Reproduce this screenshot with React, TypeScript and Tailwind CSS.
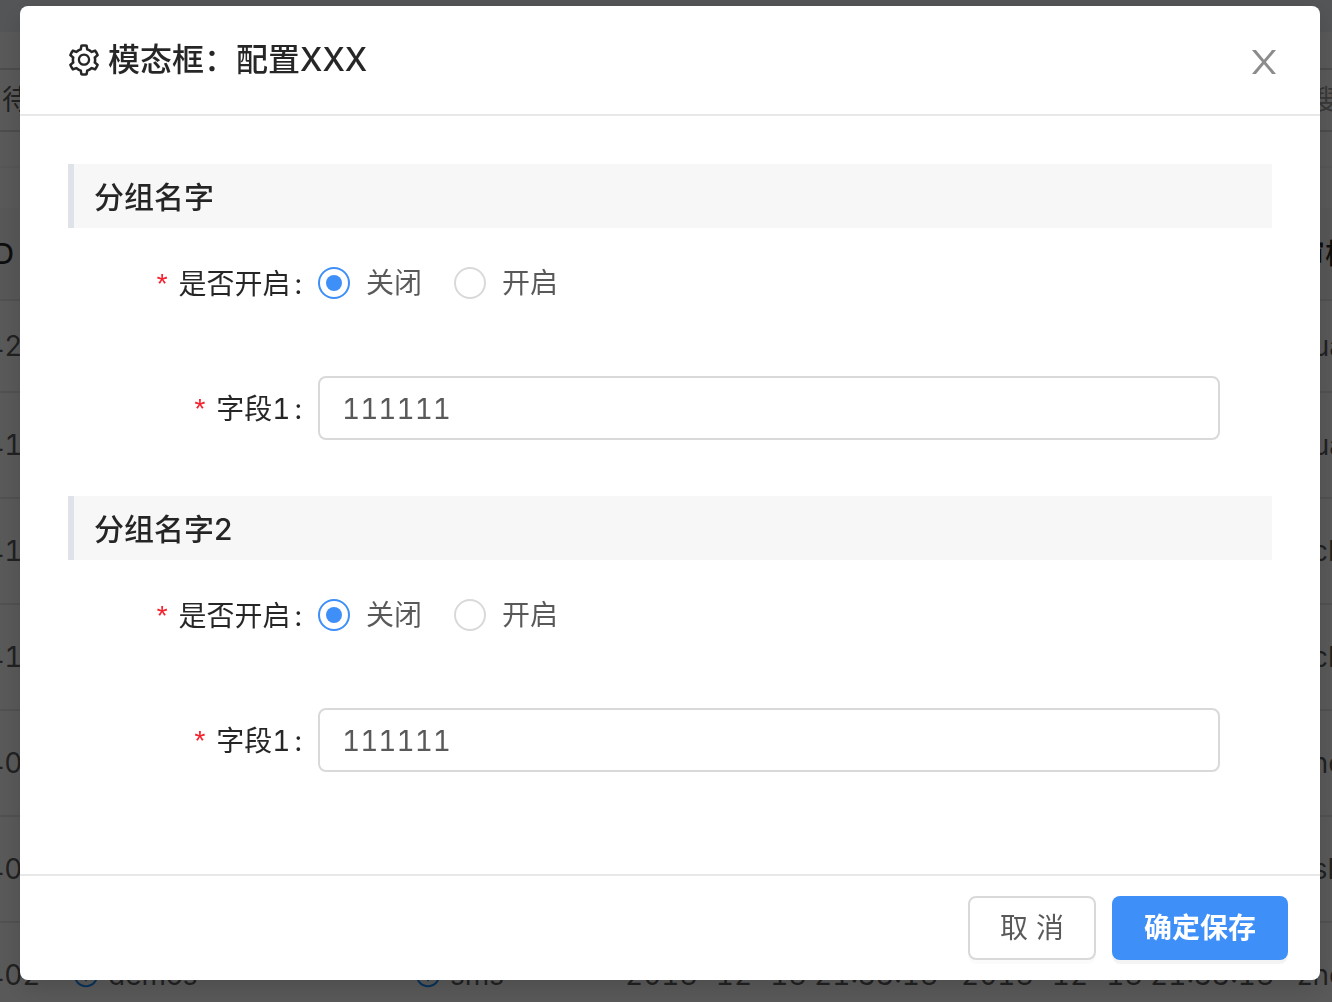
import { useState } from 'react';
import { AiOutlineInfoCircle, AiOutlineSetting } from 'react-icons/ai';

interface Row {
    id: number;
    name: string;
    channel: string;
    createdAt: string;
    updatedAt: string;
    reviewer: string;
}

interface Group {
    key: string;
    title: string;
}

const time = '2018-12-18 21:33:18';

const rows: Row[] = [
    { id: 420, name: 'demos', channel: 'sms', createdAt: time, updatedAt: time, reviewer: 'yuan' },
    { id: 419, name: 'demos', channel: 'sms', createdAt: time, updatedAt: time, reviewer: 'yuan' },
    { id: 418, name: 'demos', channel: 'sms', createdAt: time, updatedAt: time, reviewer: 'zchen' },
    { id: 417, name: 'demos', channel: 'sms', createdAt: time, updatedAt: time, reviewer: 'zchen' },
    { id: 404, name: 'demos', channel: 'sms', createdAt: time, updatedAt: time, reviewer: 'snow' },
    { id: 403, name: 'demos', channel: 'sms', createdAt: time, updatedAt: time, reviewer: 'ashe' },
    { id: 402, name: 'demos', channel: 'sms', createdAt: time, updatedAt: time, reviewer: 'zhou' },
];

const groups: Group[] = [
    { key: 'group1', title: '分组名字' },
    { key: 'group2', title: '分组名字2' },
];

function ListPage() {
    return (
        <div className="h-screen overflow-hidden bg-[#f0f2f5] pt-8 text-black/65">
            <div className="bg-white">
                <div className="h-[38px] border-b-2 border-[#d9d9d9]" />
                <div className="flex h-[62px] items-center justify-between border-b-2 border-[#d9d9d9] pl-0.5">
                    <span>待处理</span>
                    <span className="-mr-8 text-black/40">搜索</span>
                </div>
                <div className="h-9 border-b-2 border-[#f5f5f5]" />
                <div className="h-10" />
                <table className="-ml-3.5 w-[1440px] table-fixed text-left tabular-nums">
                    <colgroup>
                        <col className="w-[86px]" />
                        <col className="w-[342px]" />
                        <col className="w-[211px]" />
                        <col className="w-[336px]" />
                        <col className="w-[336px]" />
                        <col />
                    </colgroup>
                    <thead className="bg-[#fafafa] text-black/85">
                        <tr className="h-[92px] border-b-2 border-[#e8e8e8]">
                            <th className="font-medium">ID</th>
                            <th className="font-medium">名称</th>
                            <th className="font-medium">渠道</th>
                            <th className="font-medium">创建时间</th>
                            <th className="font-medium">更新时间</th>
                            <th className="font-medium">审核人</th>
                        </tr>
                    </thead>
                    <tbody>
                        {rows.map((row) => (
                            <tr key={row.id} className="h-[106px] border-b-2 border-[#e8e8e8] first:h-[92px]">
                                <td>{row.id}</td>
                                <td>
                                    <span className="flex items-center gap-2">
                                        <AiOutlineInfoCircle className="text-[#1890ff]" />
                                        {row.name}
                                    </span>
                                </td>
                                <td>
                                    <span className="flex items-center gap-2">
                                        <AiOutlineInfoCircle className="text-[#1890ff]" />
                                        {row.channel}
                                    </span>
                                </td>
                                <td className="whitespace-nowrap">{row.createdAt}</td>
                                <td className="whitespace-nowrap">{row.updatedAt}</td>
                                <td>{row.reviewer}</td>
                            </tr>
                        ))}
                    </tbody>
                </table>
            </div>
        </div>
    );
}

function CloseIcon() {
    return (
        <svg className="size-[38px]" viewBox="0 0 1024 1024" fill="currentColor" aria-hidden="true">
            <path d="M563.8 512l262.5-312.9c4.4-5.2.7-13.1-6.1-13.1h-79.8c-4.7 0-9.2 2.1-12.3 5.7L511.6 449.8 295.1 191.7c-3-3.6-7.5-5.7-12.3-5.7H203c-6.8 0-10.5 7.9-6.1 13.1L459.4 512 196.9 824.9A7.95 7.95 0 0 0 203 838h79.8c4.7 0 9.2-2.1 12.3-5.7l216.5-258.1 216.5 258.1c3 3.6 7.5 5.7 12.3 5.7h79.8c6.8 0 10.5-7.9 6.1-13.1L563.8 512z" />
        </svg>
    );
}

function Required() {
    return <span className="mr-2 font-['Liberation_Mono'] text-[#f5222d]">*</span>;
}

const rowClass = 'grid h-20 grid-cols-[250px_1fr_52px] items-center';

const labelClass = 'pt-1 pr-4 text-right text-black/85 tabular-nums';

const radioClass =
    'grid size-8 appearance-none place-items-center rounded-full border-2 border-[#d9d9d9] bg-white checked:border-[#3e8ff7] checked:before:size-4 checked:before:rounded-full checked:before:bg-[#3e8ff7]';

function GroupFields({ group }: { group: Group }) {
    const [enabled, setEnabled] = useState(false);
    const [value, setValue] = useState('111111');

    return (
        <section className="mb-12 last:mb-0">
            <h3 className="mb-[15px] h-16 border-l-6 border-[#dfe3e9] bg-[#f7f7f7] pl-5 text-[30px] leading-[66px] font-medium text-black/85">
                {group.title}
            </h3>

            <div role="radiogroup" aria-labelledby={`${group.key}-enabled`} className={`mb-[45px] ${rowClass}`}>
                <span id={`${group.key}-enabled`} className={labelClass}>
                    <Required />
                    是否开启<span className="ml-1">:</span>
                </span>
                <div className="flex items-center gap-8">
                    <label className="flex items-center gap-4">
                        <input
                            type="radio"
                            name={`${group.key}-enabled`}
                            className={radioClass}
                            checked={!enabled}
                            onChange={() => setEnabled(false)}
                        />
                        关闭
                    </label>
                    <label className="flex items-center gap-4">
                        <input
                            type="radio"
                            name={`${group.key}-enabled`}
                            className={radioClass}
                            checked={enabled}
                            onChange={() => setEnabled(true)}
                        />
                        开启
                    </label>
                </div>
            </div>

            <div className={rowClass}>
                <label htmlFor={`${group.key}-field`} className={labelClass}>
                    <Required />
                    字段1<span className="ml-1">:</span>
                </label>
                <input
                    id={`${group.key}-field`}
                    type="text"
                    className="h-16 w-full rounded-lg border-2 border-[#d9d9d9] px-[22px] pt-0.5 tabular-nums outline-none focus:border-[#3e8ff7]"
                    value={value}
                    onChange={(e) => setValue(e.target.value)}
                />
            </div>
        </section>
    );
}

export default function App() {
    return (
        <div className="font-[Inter,'Noto_Sans_CJK_SC',sans-serif] text-[28px] leading-[44px]">
            <ListPage />

            {/* Mask */}
            <div className="fixed inset-0 overflow-auto bg-black/65 pt-[6px] pr-3 pb-5 pl-5">
                <div
                    role="dialog"
                    aria-modal="true"
                    aria-labelledby="modal-title"
                    className="rounded-lg bg-white text-black/65 shadow-[0_8px_24px_rgba(0,0,0,0.15)]"
                >
                    {/* Header */}
                    <div className="flex items-center justify-between border-b-2 border-[#e8e8e8] py-8 pr-[37px] pl-[46px]">
                        <h2 id="modal-title" className="flex items-center gap-1.5 text-[32px] font-medium text-black/85">
                            <AiOutlineSetting className="size-9" />
                            模态框：配置XXX
                        </h2>
                        <button type="button" aria-label="关闭" className="pt-1 text-black/45">
                            <CloseIcon />
                        </button>
                    </div>

                    {/* Body */}
                    <div className="px-12 pt-12 pb-[94px]">
                        {groups.map((group) => (
                            <GroupFields key={group.key} group={group} />
                        ))}
                    </div>

                    {/* Footer */}
                    <div className="flex justify-end gap-4 border-t-2 border-[#e8e8e8] px-8 py-5">
                        <button
                            type="button"
                            className="h-16 rounded-lg border-2 border-[#d9d9d9] bg-white px-[30px] shadow-[0_4px_0_rgba(0,0,0,0.015)]"
                        >
                            取 消
                        </button>
                        <button
                            type="button"
                            className="h-16 rounded-lg bg-[#3e8ff7] px-8 font-bold text-white shadow-[0_4px_0_rgba(0,0,0,0.045)]"
                        >
                            确定保存
                        </button>
                    </div>
                </div>
            </div>
        </div>
    );
}
